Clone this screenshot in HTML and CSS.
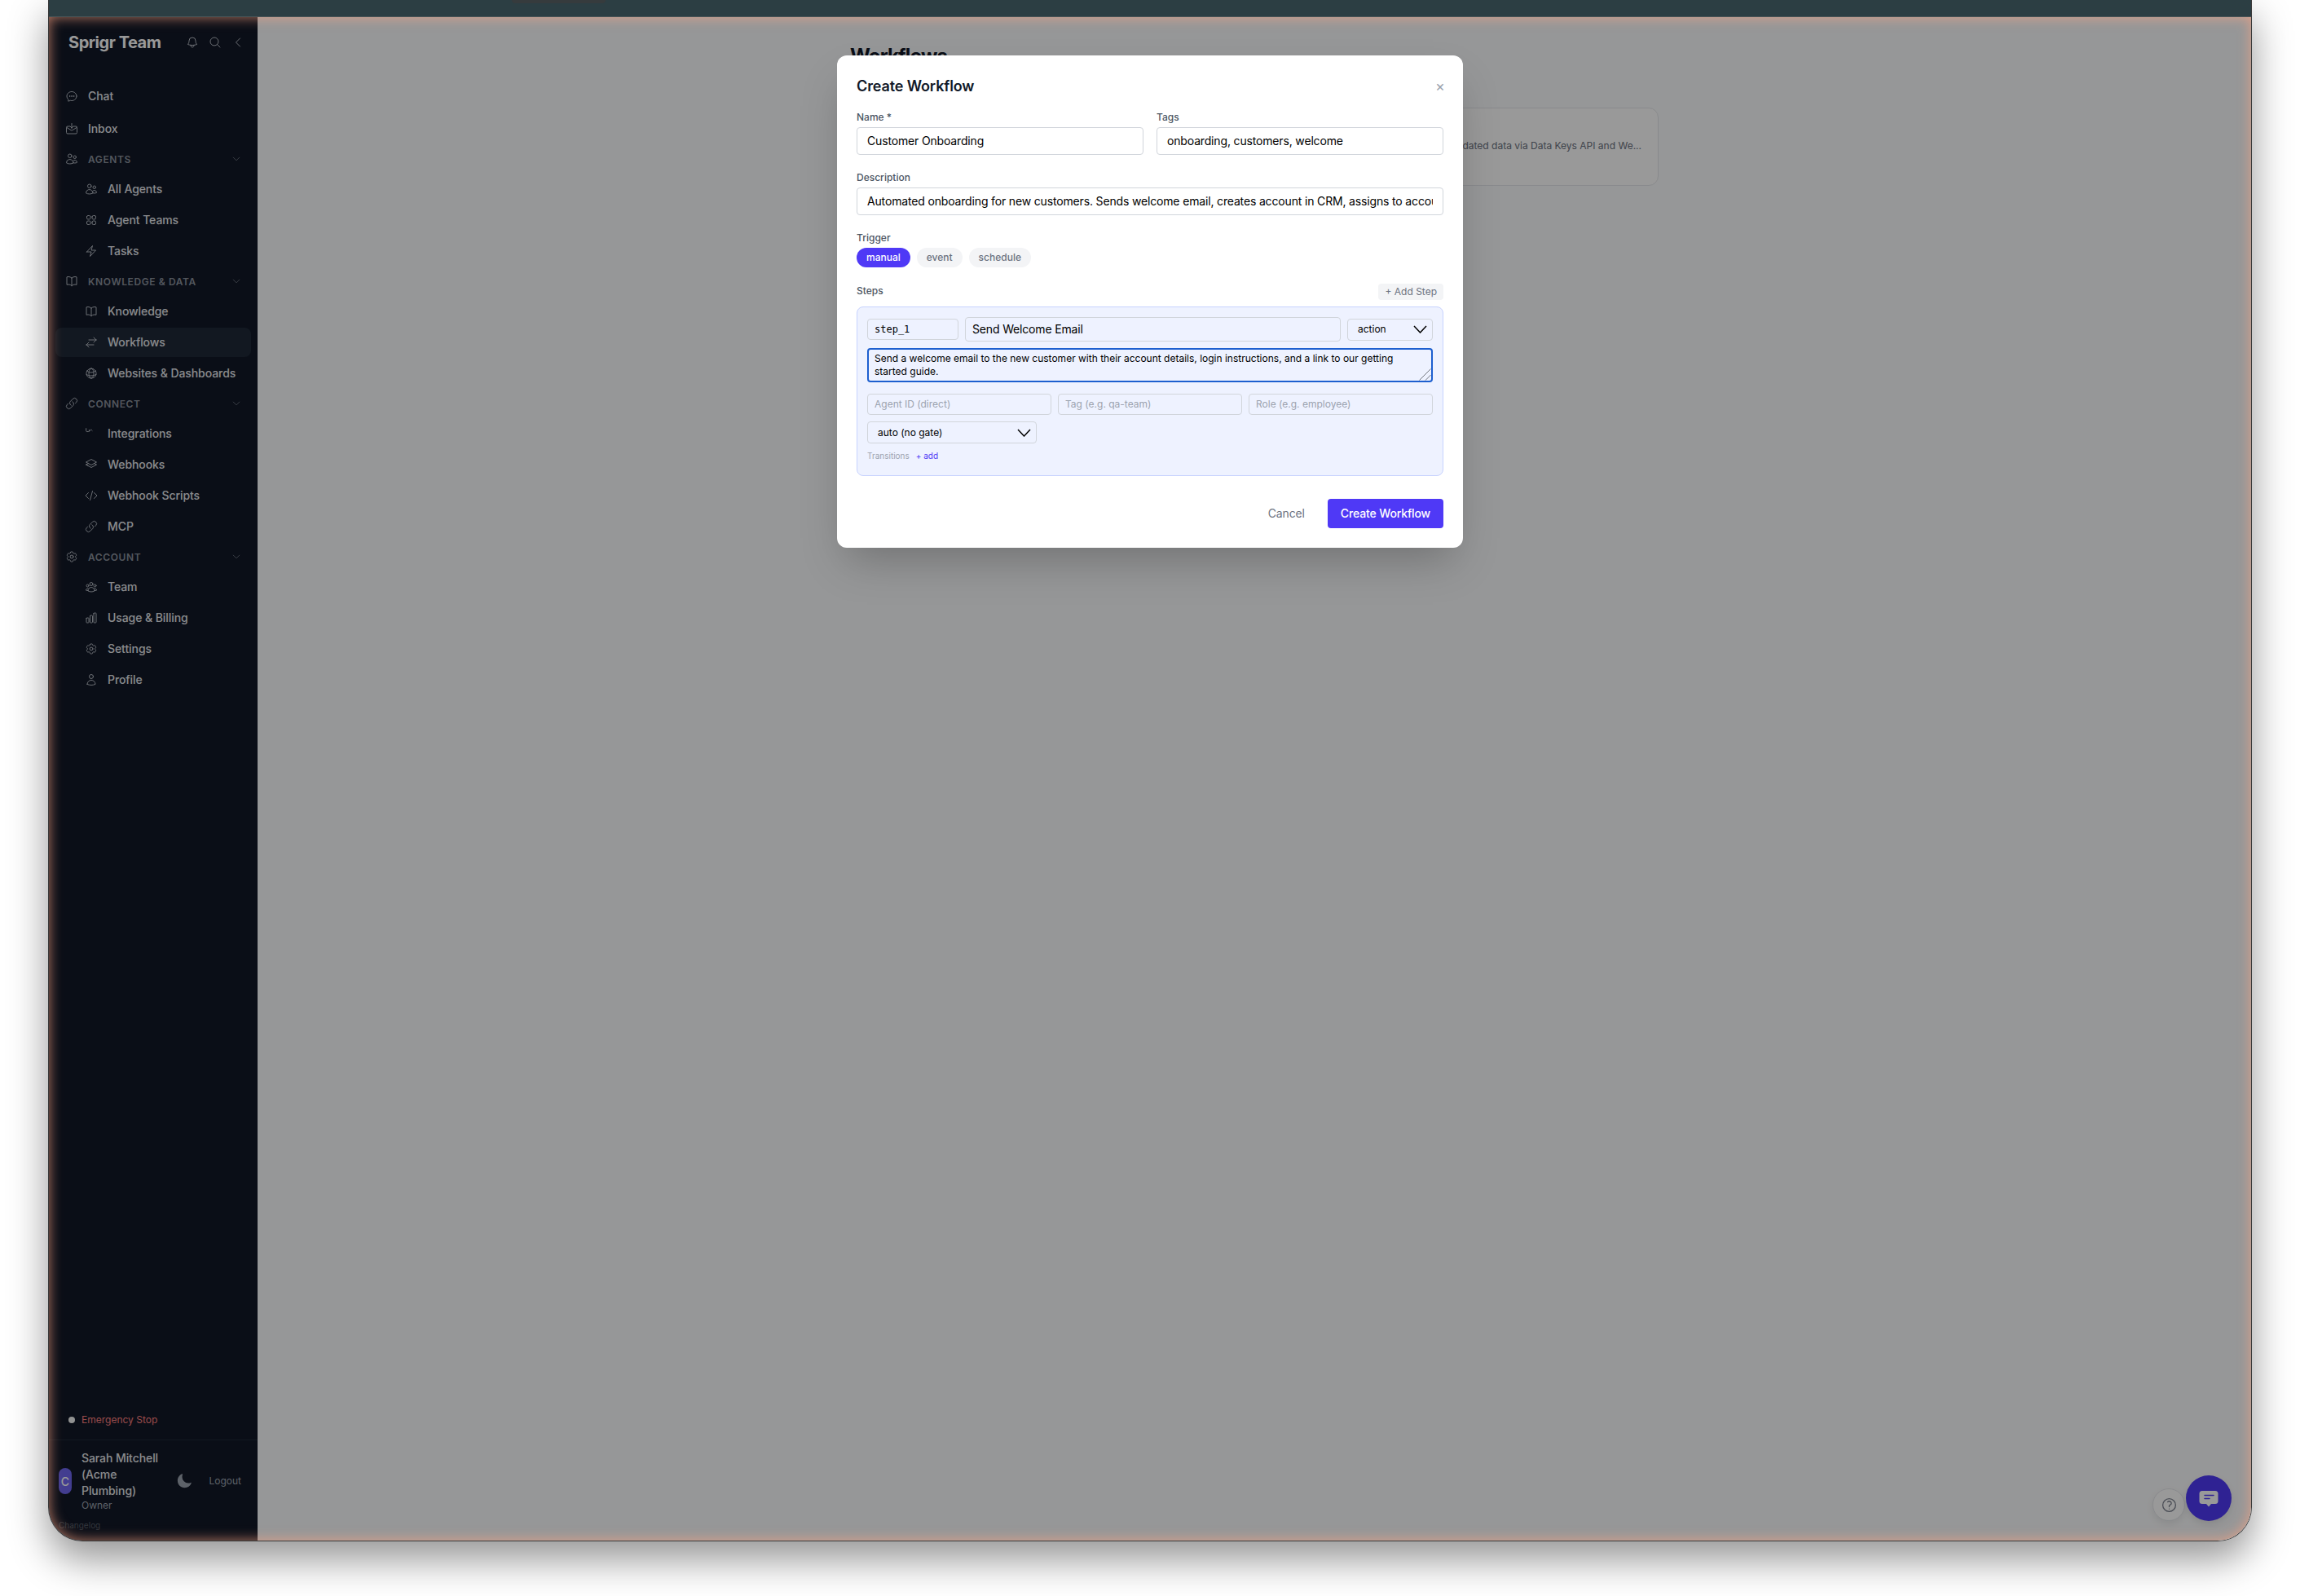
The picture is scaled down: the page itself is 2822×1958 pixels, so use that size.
FILE: index.html
```html
<!DOCTYPE html>
<html lang="en">
<head>
<meta charset="utf-8">
<title>Create Workflow</title>
<link rel="stylesheet" href="styles.css">
</head>
<body>
<svg class="defs" aria-hidden="true">
  <symbol id="i-chat" viewBox="0 0 24 24"><path d="M8.625 12a.375.375 0 1 1-.75 0 .375.375 0 0 1 .75 0Zm0 0H8.25m4.125 0a.375.375 0 1 1-.75 0 .375.375 0 0 1 .75 0Zm0 0H12m4.125 0a.375.375 0 1 1-.75 0 .375.375 0 0 1 .75 0Zm0 0h-.375M21 12c0 4.556-4.03 8.25-9 8.25a9.764 9.764 0 0 1-2.555-.337A5.972 5.972 0 0 1 5.41 20.97a5.969 5.969 0 0 1-.474-.065 4.48 4.48 0 0 0 .978-2.025c.09-.457-.133-.901-.467-1.226C3.93 16.178 3 14.189 3 12c0-4.556 4.03-8.25 9-8.25s9 3.694 9 8.25Z"/></symbol>
  <symbol id="i-inbox" viewBox="0 0 24 24"><path d="M8.25 7.5H4.5a2.25 2.25 0 0 0-2.25 2.25v9a2.25 2.25 0 0 0 2.25 2.25h15a2.25 2.25 0 0 0 2.25-2.25v-9a2.25 2.25 0 0 0-2.25-2.25h-3.75M2.6 9.4l8.2 5.3a2.25 2.25 0 0 0 2.4 0l8.2-5.3M12 2.25v8.25m0 0-3-3m3 3 3-3"/></symbol>
  <symbol id="i-users" viewBox="0 0 24 24"><path d="M15 19.128a9.38 9.38 0 0 0 2.625.372 9.337 9.337 0 0 0 4.121-.952 4.125 4.125 0 0 0-7.533-2.493M15 19.128v-.003c0-1.113-.285-2.16-.786-3.07M15 19.128v.106A12.318 12.318 0 0 1 8.624 21c-2.331 0-4.512-.645-6.374-1.766l-.001-.109a6.375 6.375 0 0 1 11.964-3.07M12 6.375a3.375 3.375 0 1 1-6.75 0 3.375 3.375 0 0 1 6.75 0Zm8.25 2.25a2.625 2.625 0 1 1-5.25 0 2.625 2.625 0 0 1 5.25 0Z"/></symbol>
  <symbol id="i-squares" viewBox="0 0 24 24"><path d="M3.75 6A2.25 2.25 0 0 1 6 3.75h2.25A2.25 2.25 0 0 1 10.5 6v2.25a2.25 2.25 0 0 1-2.25 2.25H6a2.25 2.25 0 0 1-2.25-2.25V6ZM3.75 15.75A2.25 2.25 0 0 1 6 13.5h2.25a2.25 2.25 0 0 1 2.25 2.25V18a2.25 2.25 0 0 1-2.25 2.25H6A2.25 2.25 0 0 1 3.75 18v-2.25ZM13.5 6a2.25 2.25 0 0 1 2.25-2.25H18A2.25 2.25 0 0 1 20.25 6v2.25A2.25 2.25 0 0 1 18 10.5h-2.25a2.25 2.25 0 0 1-2.25-2.25V6ZM13.5 15.75a2.25 2.25 0 0 1 2.25-2.25H18a2.25 2.25 0 0 1 2.25 2.25V18A2.25 2.25 0 0 1 18 20.25h-2.25A2.25 2.25 0 0 1 13.5 18v-2.25Z"/></symbol>
  <symbol id="i-bolt" viewBox="0 0 24 24"><path d="m3.75 13.5 10.5-11.25L12 10.5h8.25L9.75 21.75 12 13.5H3.75Z"/></symbol>
  <symbol id="i-book" viewBox="0 0 24 24"><path d="M12 6.042A8.967 8.967 0 0 0 6 3.75c-1.052 0-2.062.18-3 .512v14.25A8.987 8.987 0 0 1 6 18c2.305 0 4.408.867 6 2.292m0-14.25a8.966 8.966 0 0 1 6-2.292c1.052 0 2.062.18 3 .512v14.25A8.987 8.987 0 0 0 18 18a8.967 8.967 0 0 0-6 2.292m0-14.25v14.25"/></symbol>
  <symbol id="i-arrows" viewBox="0 0 24 24"><path d="M7.5 21 3 16.5m0 0L7.5 12M3 16.5h13.5m0-13.5L21 7.5m0 0L16.5 12M21 7.5H7.5"/></symbol>
  <symbol id="i-globe" viewBox="0 0 24 24"><path d="M12 21a9.004 9.004 0 0 0 8.716-6.747M12 21a9.004 9.004 0 0 1-8.716-6.747M12 21c2.485 0 4.5-4.03 4.5-9S14.485 3 12 3m0 18c-2.485 0-4.5-4.03-4.5-9S9.515 3 12 3m0 0a8.997 8.997 0 0 1 7.843 4.582M12 3a8.997 8.997 0 0 0-7.843 4.582m15.686 0A11.953 11.953 0 0 1 12 10.5c-2.998 0-5.74-1.1-7.843-2.918m15.686 0A8.959 8.959 0 0 1 21 12c0 .778-.099 1.533-.284 2.253m0 0A17.919 17.919 0 0 1 12 16.5c-3.162 0-6.133-.815-8.716-2.247m0 0A9.015 9.015 0 0 1 3 12c0-1.605.42-3.113 1.157-4.418"/></symbol>
  <symbol id="i-link" viewBox="0 0 24 24"><path d="M13.19 8.688a4.5 4.5 0 0 1 1.242 7.244l-4.5 4.5a4.5 4.5 0 0 1-6.364-6.364l1.757-1.757m13.35-.622 1.757-1.757a4.5 4.5 0 0 0-6.364-6.364l-4.5 4.5a4.5 4.5 0 0 0 1.242 7.244"/></symbol>
  <symbol id="i-squiggle" viewBox="0 0 24 24"><path d="M2.5 2.5v4.2a1.6 1.6 0 0 0 1.6 1.6h2.4a1.6 1.6 0 0 0 1.6-1.6V5.2M8.1 7.5c1.4-.2 2.2-1 2.6-2.2.3-.9 1.6-.9 2 0 .2.5.5 1 .9 1.3"/></symbol>
  <symbol id="i-stack" viewBox="0 0 24 24"><path d="M6.429 9.75 2.25 12l4.179 2.25m0-4.5 5.571 3 5.571-3m-11.142 0L2.25 7.5 12 2.25l9.75 5.25-4.179 2.25m0 0L21.75 12 12 17.25 2.25 12"/></symbol>
  <symbol id="i-code" viewBox="0 0 24 24"><path d="M17.25 6.75 22.5 12l-5.25 5.25m-10.5 0L1.5 12l5.25-5.25m7.5-3-4.5 16.5"/></symbol>
  <symbol id="i-cog" viewBox="0 0 24 24"><path d="M9.594 3.94c.09-.542.56-.94 1.11-.94h2.593c.55 0 1.02.398 1.11.94l.213 1.281c.063.374.313.686.645.87.074.04.147.083.22.127.325.196.72.257 1.075.124l1.217-.456a1.125 1.125 0 0 1 1.37.49l1.296 2.247a1.125 1.125 0 0 1-.26 1.431l-1.003.827c-.293.241-.438.613-.43.992a7.723 7.723 0 0 1 0 .255c-.008.378.137.75.43.991l1.004.827c.424.35.534.955.26 1.43l-1.298 2.247a1.125 1.125 0 0 1-1.369.491l-1.217-.456c-.355-.133-.75-.072-1.076.124a6.47 6.47 0 0 1-.22.128c-.331.183-.581.495-.644.869l-.213 1.281c-.09.543-.56.94-1.11.94h-2.594c-.55 0-1.019-.398-1.11-.94l-.213-1.281c-.062-.374-.312-.686-.644-.87a6.52 6.52 0 0 1-.22-.127c-.325-.196-.72-.257-1.076-.124l-1.217.456a1.125 1.125 0 0 1-1.369-.49l-1.297-2.247a1.125 1.125 0 0 1 .26-1.431l1.004-.827c.292-.24.437-.613.43-.991a6.932 6.932 0 0 1 0-.255c.007-.38-.138-.751-.43-.992l-1.004-.827a1.125 1.125 0 0 1-.26-1.43l1.297-2.247a1.125 1.125 0 0 1 1.37-.491l1.216.456c.356.133.751.072 1.076-.124.072-.044.146-.086.22-.128.332-.183.582-.495.644-.869l.214-1.28ZM15 12a3 3 0 1 1-6 0 3 3 0 0 1 6 0Z"/></symbol>
  <symbol id="i-team" viewBox="0 0 24 24"><path d="M18 18.72a9.094 9.094 0 0 0 3.741-.479 3 3 0 0 0-4.682-2.72m.94 3.198.001.031c0 .225-.012.447-.037.666A11.944 11.944 0 0 1 12 21c-2.17 0-4.207-.576-5.963-1.584A6.062 6.062 0 0 1 6 18.719m12 0a5.971 5.971 0 0 0-.941-3.197m0 0A5.995 5.995 0 0 0 12 12.75a5.995 5.995 0 0 0-5.058 2.772m0 0a3 3 0 0 0-4.681 2.72 8.986 8.986 0 0 0 3.74.477m.94-3.197a5.971 5.971 0 0 0-.94 3.197M15 6.75a3 3 0 1 1-6 0 3 3 0 0 1 6 0Zm6 3a2.25 2.25 0 1 1-4.5 0 2.25 2.25 0 0 1 4.5 0Zm-13.5 0a2.25 2.25 0 1 1-4.5 0 2.25 2.25 0 0 1 4.5 0Z"/></symbol>
  <symbol id="i-chart" viewBox="0 0 24 24"><path d="M3 13.125C3 12.504 3.504 12 4.125 12h2.25c.621 0 1.125.504 1.125 1.125v6.75C7.5 20.496 6.996 21 6.375 21h-2.25A1.125 1.125 0 0 1 3 19.875v-6.75ZM9.75 8.625c0-.621.504-1.125 1.125-1.125h2.25c.621 0 1.125.504 1.125 1.125v11.25c0 .621-.504 1.125-1.125 1.125h-2.25a1.125 1.125 0 0 1-1.125-1.125V8.625ZM16.5 4.125c0-.621.504-1.125 1.125-1.125h2.25C20.496 3 21 3.504 21 4.125v15.75c0 .621-.504 1.125-1.125 1.125h-2.25a1.125 1.125 0 0 1-1.125-1.125V4.125Z"/></symbol>
  <symbol id="i-user" viewBox="0 0 24 24"><path d="M15.75 6a3.75 3.75 0 1 1-7.5 0 3.75 3.75 0 0 1 7.5 0ZM4.501 20.118a7.5 7.5 0 0 1 14.998 0A17.933 17.933 0 0 1 12 21.75c-2.676 0-5.216-.584-7.499-1.632Z"/></symbol>
  <symbol id="i-bell" viewBox="0 0 24 24"><path d="M14.857 17.082a23.848 23.848 0 0 0 5.454-1.31A8.967 8.967 0 0 1 18 9.75V9A6 6 0 0 0 6 9v.75a8.967 8.967 0 0 1-2.312 6.022c1.733.64 3.56 1.085 5.455 1.31m5.714 0a24.255 24.255 0 0 1-5.714 0m5.714 0a3 3 0 1 1-5.714 0"/></symbol>
  <symbol id="i-search" viewBox="0 0 24 24"><path d="m21 21-5.197-5.197m0 0A7.5 7.5 0 1 0 5.196 5.196a7.5 7.5 0 0 0 10.607 10.607Z"/></symbol>
  <symbol id="i-left" viewBox="0 0 24 24"><path d="M15.75 19.5 8.25 12l7.5-7.5"/></symbol>
  <symbol id="i-down" viewBox="0 0 24 24"><path d="m19.5 8.25-7.5 7.5-7.5-7.5"/></symbol>
  <symbol id="i-help" viewBox="0 0 24 24"><path d="M9.879 7.519c1.171-1.025 3.071-1.025 4.242 0 1.172 1.025 1.172 2.687 0 3.712-.203.179-.43.326-.67.442-.745.361-1.45.999-1.45 1.827v.75M21 12a9 9 0 1 1-18 0 9 9 0 0 1 18 0Zm-9 5.25h.008v.008H12v-.008Z"/></symbol>
</svg>

<div class="window">
  <div class="topbar"><span class="notch"></span></div>
  <div class="app">
    <aside class="sidebar">
      <div class="brand">
        <span class="brand-name">Sprigr Team</span>
        <span class="brand-actions">
          <svg class="ico"><use href="#i-bell"/></svg>
          <svg class="ico"><use href="#i-search"/></svg>
          <svg class="ico"><use href="#i-left"/></svg>
        </span>
      </div>
      <nav class="nav">
        <a class="item top"><svg class="ico"><use href="#i-chat"/></svg>Chat</a>
        <a class="item top"><svg class="ico"><use href="#i-inbox"/></svg>Inbox</a>
        <div class="section"><svg class="ico"><use href="#i-users"/></svg><span class="section-name">Agents</span><svg class="ico chev"><use href="#i-down"/></svg></div>
        <a class="item sub"><svg class="ico"><use href="#i-users"/></svg>All Agents</a>
        <a class="item sub"><svg class="ico"><use href="#i-squares"/></svg>Agent Teams</a>
        <a class="item sub"><svg class="ico"><use href="#i-bolt"/></svg>Tasks</a>
        <div class="section"><svg class="ico"><use href="#i-book"/></svg><span class="section-name">Knowledge &amp; Data</span><svg class="ico chev"><use href="#i-down"/></svg></div>
        <a class="item sub"><svg class="ico"><use href="#i-book"/></svg>Knowledge</a>
        <a class="item sub active"><svg class="ico"><use href="#i-arrows"/></svg>Workflows</a>
        <a class="item sub"><svg class="ico"><use href="#i-globe"/></svg>Websites &amp; Dashboards</a>
        <div class="section"><svg class="ico"><use href="#i-link"/></svg><span class="section-name">Connect</span><svg class="ico chev"><use href="#i-down"/></svg></div>
        <a class="item sub"><svg class="ico"><use href="#i-squiggle"/></svg>Integrations</a>
        <a class="item sub"><svg class="ico"><use href="#i-stack"/></svg>Webhooks</a>
        <a class="item sub"><svg class="ico"><use href="#i-code"/></svg>Webhook Scripts</a>
        <a class="item sub"><svg class="ico"><use href="#i-link"/></svg>MCP</a>
        <div class="section"><svg class="ico"><use href="#i-cog"/></svg><span class="section-name">Account</span><svg class="ico chev"><use href="#i-down"/></svg></div>
        <a class="item sub"><svg class="ico"><use href="#i-team"/></svg>Team</a>
        <a class="item sub"><svg class="ico"><use href="#i-chart"/></svg>Usage &amp; Billing</a>
        <a class="item sub"><svg class="ico"><use href="#i-cog"/></svg>Settings</a>
        <a class="item sub"><svg class="ico"><use href="#i-user"/></svg>Profile</a>
      </nav>
      <div class="emergency"><span class="dot"></span>Emergency Stop</div>
      <div class="account">
        <div class="user-row">
          <span class="avatar">C</span>
          <div class="user-text">
            <div class="user-name">Sarah Mitchell (Acme Plumbing)</div>
            <div class="user-role">Owner</div>
          </div>
          <svg class="moon" viewBox="0 0 24 24"><path d="M9.528 1.718a.75.75 0 0 1 .162.819A8.97 8.97 0 0 0 9 6a9 9 0 0 0 9 9 8.97 8.97 0 0 0 3.463-.69.75.75 0 0 1 .981.98 10.503 10.503 0 0 1-9.694 6.46c-5.799 0-10.5-4.7-10.5-10.5 0-4.368 2.667-8.112 6.46-9.694a.75.75 0 0 1 .818.162Z"/></svg>
          <span class="logout">Logout</span>
        </div>
        <div class="changelog">Changelog</div>
      </div>
    </aside>
    <main class="main">
      <div class="content">
        <h1 class="page-title">Workflows</h1>
        <div class="wf-card"><span class="wf-desc">Dashboards with auto-updated data via Data Keys API and We...</span></div>
      </div>
      <div class="fabs">
        <span class="fab-help"><svg class="help-ico"><use href="#i-help"/></svg></span>
        <span class="fab-chat">
          <svg class="chat-ico" viewBox="0 0 24 20"><path class="bubble" d="M4 0h16a3.5 3.5 0 0 1 3.5 3.5v9A3.5 3.5 0 0 1 20 16h-5l-3 3.6L9 16H4a3.5 3.5 0 0 1-3.5-3.5v-9A3.5 3.5 0 0 1 4 0Z"/><path class="bars" d="M7 5.5h11M7 9.5h6"/></svg>
        </span>
      </div>
    </main>
  </div>

  <div class="overlay">
    <form class="modal">
      <div class="modal-head">
        <h2 class="modal-title">Create Workflow</h2>
        <span class="close">×</span>
      </div>
      <div class="two-col">
        <div>
          <label class="label">Name *</label>
          <input class="field" value="Customer Onboarding">
        </div>
        <div>
          <label class="label">Tags</label>
          <input class="field" value="onboarding, customers, welcome">
        </div>
      </div>
      <div class="group">
        <label class="label">Description</label>
        <input class="field" value="Automated onboarding for new customers. Sends welcome email, creates account in CRM, assigns to account manager.">
      </div>
      <div class="group">
        <label class="label">Trigger</label>
        <div class="pills">
          <span class="pill on">manual</span>
          <span class="pill">event</span>
          <span class="pill">schedule</span>
        </div>
      </div>
      <div class="steps-head">
        <span class="steps-label">Steps</span>
        <span class="add-step">+ Add Step</span>
      </div>
      <div class="step">
        <div class="step-row">
          <input class="mini mono step-id" value="step_1">
          <input class="step-name" value="Send Welcome Email">
          <select class="sel sel-type"><option>action</option></select>
        </div>
        <div class="text-wrap">
          <textarea class="step-text" rows="2">Send a welcome email to the new customer with their account details, login instructions, and a link to our getting started guide.</textarea>
          <svg class="grip" viewBox="0 0 16 16"><path d="M15.5.5.5 15.5M15.5 8.5l-7 7"/></svg>
        </div>
        <div class="assign">
          <input class="mini lifted" placeholder="Agent ID (direct)">
          <input class="mini lifted" placeholder="Tag (e.g. qa-team)">
          <input class="mini lifted" placeholder="Role (e.g. employee)">
        </div>
        <select class="sel sel-gate"><option>auto (no gate)</option></select>
        <div class="transitions"><span>Transitions</span><span class="add-link">+ add</span></div>
      </div>
      <div class="modal-foot">
        <span class="cancel">Cancel</span>
        <span class="primary">Create Workflow</span>
      </div>
    </form>
  </div>
  <div class="glow"></div>
</div>
</body>
</html>
```

FILE: styles.css
```css
* { box-sizing: border-box; }
html, body { margin: 0; padding: 0; background: #fff; }
body { height: 1958px; overflow: hidden; font-family: Inter, "Noto Sans", sans-serif; color: #111827; }
.defs { position: absolute; width: 0; height: 0; }

.window {
  position: relative;
  margin: 0 59px;
  height: 1891px;
  display: flex;
  flex-direction: column;
  background: #f9fafb;
  border: 1px solid #3a3a3a;
  border-top: 0;
  border-radius: 0 0 42px 42px;
  box-shadow: 0 22px 48px rgba(0, 0, 0, .42);
  overflow: hidden;
}
.topbar { flex: 0 0 21px; background: #2c3e43; border-bottom: 1px solid #4a5557; display: flex; }
.notch { width: 115px; height: 4px; margin-left: 568px; background: #363b3d; border-radius: 0 0 10px 10px; }
.app { flex: 1; display: flex; min-height: 0; }

/* sidebar */
.sidebar { width: 256px; flex: none; background: #111827; display: flex; flex-direction: column; color: #d1d5db; }
.brand { height: 62px; flex: none; display: flex; align-items: center; justify-content: space-between; padding: 0 16px 0 24px; }
.brand-name { font-size: 20px; font-weight: 700; color: #fff; letter-spacing: -.47px; }
.brand-actions { display: flex; gap: 12px; }
.ico { width: 16px; height: 16px; flex: none; fill: none; stroke: #b4b9c2; stroke-width: 1.5; stroke-linecap: round; stroke-linejoin: round; }
.nav { flex: 1; padding: 17px 8px 0; display: flex; flex-direction: column; gap: 2px; }
.item { height: 36px; flex: none; display: flex; align-items: center; gap: 12px; padding: 0 0 2px 12px; font-size: 14px; font-weight: 500; letter-spacing: -.08px; color: #e5e7eb; border-radius: 8px; }
.item .ico { margin-top: 2px; }
.item.top + .item.top { margin-top: 2px; }
.item.sub { padding-left: 36px; }
.item.active { background: #1f2937; }
.section { height: 34px; flex: none; display: flex; align-items: center; gap: 12px; padding: 0 12px; font-size: 12px; font-weight: 600; letter-spacing: .6px; text-transform: uppercase; color: #8b919c; }
.section-name { flex: 1; }
.chev { width: 12px; height: 12px; stroke: #7b818d; }
.emergency { height: 48px; flex: none; display: flex; align-items: center; gap: 8px; padding: 0 0 2px 24px; font-size: 12px; color: #fb7f7f; }
.dot { width: 8px; height: 8px; margin-top: 2px; border-radius: 50%; background: #fff; opacity: .95; }
.account { border-top: 1px solid #1f2937; padding: 12px 20px 11px 12px; flex: none; }
.user-row { display: flex; align-items: center; }
.avatar { width: 16px; height: 32px; flex: none; border-radius: 8px; background: #6f66f0; color: #fff; display: flex; align-items: center; justify-content: center; font-size: 14px; font-weight: 500; margin-right: 12px; }
.user-text { flex: 1; min-width: 0; }
.user-name { font-size: 14px; line-height: 20px; font-weight: 500; letter-spacing: -.08px; color: #e5e7eb; }
.user-role { font-size: 12px; line-height: 16px; color: #9ca3af; }
.moon { width: 20px; height: 20px; flex: none; fill: #9ca3af; margin: 0 20px 0 8px; }
.logout { font-size: 12px; color: #9ca3af; padding-bottom: 2px; }
.changelog { margin-top: 8px; font-size: 10px; line-height: 16px; color: #555b66; }

/* page behind the dialog */
.main { flex: 1; position: relative; background: #fbfcfd; min-width: 0; }
.content { width: 992px; margin: 0 auto; padding-top: 32px; }
.page-title { margin: 0 0 47px; font-size: 24px; line-height: 32px; font-weight: 700; letter-spacing: -.85px; color: #111827; }
.wf-card { height: 96px; display: flex; align-items: center; justify-content: flex-end; background: #fff; border: 1px solid #e5e7eb; border-radius: 12px; padding: 0 20px 4px; }
.wf-desc { font-size: 12px; color: #6b7280; white-space: nowrap; }
.fabs { position: absolute; right: 24px; bottom: 24px; display: flex; align-items: flex-end; gap: 1px; }
.fab-help { width: 40px; height: 40px; border-radius: 50%; background: #fff; border: 1px solid #e5e7eb; box-shadow: 0 4px 10px rgba(0, 0, 0, .08); display: flex; align-items: center; justify-content: center; }
.help-ico { width: 21px; height: 21px; fill: none; stroke: #7d8290; stroke-width: 1.5; stroke-linecap: round; stroke-linejoin: round; }
.fab-chat { width: 56px; height: 56px; border-radius: 50%; background: #4f39f6; display: flex; align-items: center; justify-content: center; box-shadow: 0 4px 10px rgba(0, 0, 0, .1); }
.chat-ico { width: 24px; height: 20px; margin-top: 2px; }
.bubble { fill: #fff; }
.bars { fill: none; stroke: #4f39f6; stroke-width: 1.5; stroke-linecap: round; }

/* overlay + dialog */
.overlay { position: absolute; left: 0; right: 0; top: 21px; bottom: 0; background: rgba(0, 0, 0, .4); display: flex; justify-content: center; align-items: flex-start; padding-top: 47px; }
.glow { position: absolute; left: 0; right: 0; top: 21px; bottom: 0; pointer-events: none; box-shadow: inset 0 0 16px rgba(255, 165, 130, .72); border-radius: 0 0 41px 41px; }
.modal { width: 768px; background: #fff; border-radius: 12px; padding: 24px; box-shadow: 0 25px 50px -12px rgba(0, 0, 0, .25); }
.modal-head { display: flex; justify-content: space-between; align-items: center; height: 28px; margin-bottom: 16px; }
.modal-title { margin: 0; font-size: 18px; line-height: 28px; font-weight: 600; letter-spacing: -.12px; color: #111827; }
.close { font-size: 18px; line-height: 28px; color: #9ca3af; margin-right: -2px; }
.two-col { display: grid; grid-template-columns: 1fr 1fr; gap: 16px; }
.group { margin-top: 20px; }
.label { display: block; font-size: 12px; line-height: 16px; font-weight: 500; color: #4b5563; margin-bottom: 4px; }
.field { display: block; width: 100%; height: 34px; padding: 5px 12px 7px; font: 14px/20px Inter, sans-serif; letter-spacing: -.16px; color: #000; background: #fff; border: 1px solid #d1d5db; border-radius: 4px; }
.pills { display: flex; gap: 8px; }
.pill { height: 24px; padding: 0 12px 2px; display: flex; align-items: center; font-size: 12px; font-weight: 500; color: #6b7280; background: #f3f4f6; border-radius: 12px; }
.pill.on { background: #4f39f6; color: #fff; }
.steps-head { margin-top: 20px; height: 20px; display: flex; align-items: center; justify-content: space-between; margin-bottom: 8px; }
.steps-label { font-size: 12px; font-weight: 500; color: #4b5563; padding-bottom: 3px; }
.add-step { height: 20px; padding: 0 8px 2px; display: flex; align-items: center; font-size: 12px; color: #6b7280; background: #f3f4f6; border-radius: 4px; }
.step { border: 1px solid #c7d2fe; background: #eef2ff; border-radius: 8px; padding: 12px; }
.step-row { display: flex; align-items: center; gap: 8px; }
.mini { height: 26px; padding: 4px 8px; font: 12px/16px Inter, sans-serif; color: #000; background: transparent; border: 1px solid #d1d5db; border-radius: 4px; min-width: 0; }
.lifted { padding: 3px 8px 5px; }
.mini::placeholder { color: #9ca3af; }
.mono { font-family: "DejaVu Sans Mono", monospace; }
.step-id { width: 112px; flex: none; }
.step-name { flex: 1; min-width: 0; height: 30px; padding: 3px 8px 5px; font: 14px/20px Inter, sans-serif; letter-spacing: -.16px; color: #000; background: transparent; border: 1px solid #d1d5db; border-radius: 4px; }
.sel {
  appearance: none;
  height: 27px;
  padding: 4px 28px 4px 12px;
  font: 12px/16px Inter, sans-serif;
  color: #000;
  border: 1px solid #d1d5db;
  border-radius: 4px;
  background: transparent url("data:image/svg+xml;utf8,<svg xmlns='http://www.w3.org/2000/svg' width='17' height='10' viewBox='0 0 17 10'><path d='M1 1l7.5 8L16 1' fill='none' stroke='black' stroke-width='1.5'/></svg>") no-repeat right 6px center / 17px 10px;
}
.sel-type { width: 105px; flex: none; }
.sel-gate { display: block; width: 208px; margin-top: 8px; }
.text-wrap { position: relative; margin-top: 8px; }
.step-text { display: block; width: 100%; height: 42px; padding: 3px 7px; font: 12px/16px Inter, sans-serif; color: #000; background: transparent; border: 2px solid #1d5fcf; border-radius: 4px; resize: none; overflow: hidden; }
.grip { position: absolute; right: 2px; bottom: 2px; width: 15px; height: 15px; fill: none; stroke: #6b6f78; stroke-width: 1; }
.assign { display: grid; grid-template-columns: repeat(3, 1fr); gap: 8px; margin-top: 14px; }
.transitions { display: flex; gap: 8px; margin-top: 8px; padding-bottom: 4px; font-size: 10px; line-height: 15px; color: #9ca3af; }
.add-link { color: #4f39f6; }
.modal-foot { margin-top: 28px; display: flex; justify-content: flex-end; align-items: center; gap: 28px; }
.cancel { font-size: 14px; letter-spacing: -.14px; color: #6b7280; padding-bottom: 2px; }
.primary { height: 36px; padding: 0 16px 2px; display: flex; align-items: center; font-size: 14px; font-weight: 500; letter-spacing: -.14px; color: #fff; background: #4f39f6; border-radius: 4px; }
```
